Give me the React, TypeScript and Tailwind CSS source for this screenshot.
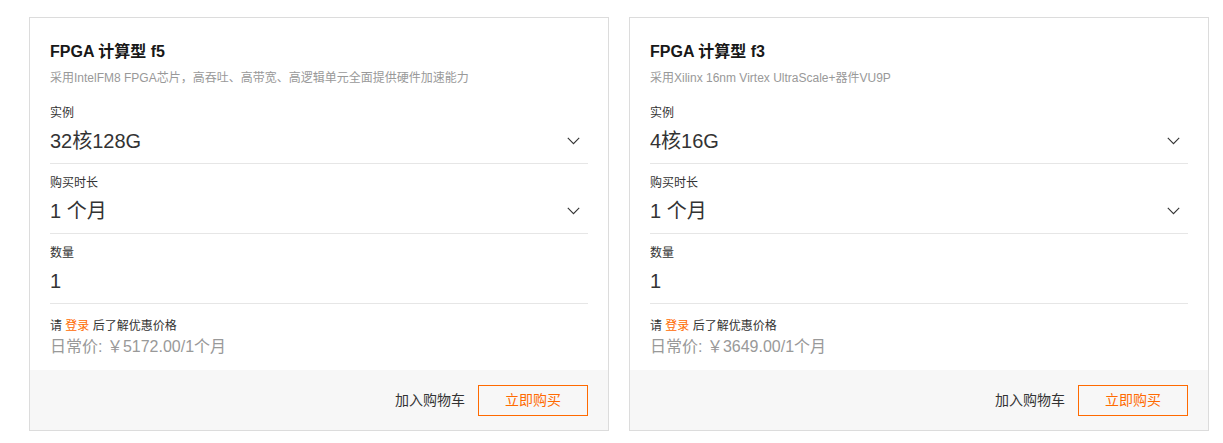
const FONT = "font-['Liberation_Sans','Noto_Sans_CJK_SC',sans-serif]";

interface Product {
  title: string;
  desc: string;
  instance: string;
  duration: string;
  qty: string;
  price: string;
}

const products: Product[] = [
  {
    title: "FPGA 计算型 f5",
    desc: "采用IntelFM8 FPGA芯片，高吞吐、高带宽、高逻辑单元全面提供硬件加速能力",
    instance: "32核128G",
    duration: "1 个月",
    qty: "1",
    price: "日常价: ￥5172.00/1个月",
  },
  {
    title: "FPGA 计算型 f3",
    desc: "采用Xilinx 16nm Virtex UltraScale+器件VU9P",
    instance: "4核16G",
    duration: "1 个月",
    qty: "1",
    price: "日常价: ￥3649.00/1个月",
  },
];

function Chevron() {
  return (
    <svg width="13" height="8" viewBox="0 0 13 8" fill="none" className="mr-[8px]">
      <path d="M0.8 0.8 L6.5 6.6 L12.2 0.8" stroke="#333" strokeWidth="1.1" />
    </svg>
  );
}

function Field({ label, value, select }: { label: string; value: string; select?: boolean }) {
  return (
    <div className="border-b border-[#e6e6e6] pt-[10px] pb-[8px]">
      <div className="text-[12px] leading-[18px] text-[#333]">{label}</div>
      <div className="mt-[5px] flex h-[28px] items-center justify-between">
        <span className="text-[20px] leading-[28px] text-[#333]">{value}</span>
        {select && <Chevron />}
      </div>
    </div>
  );
}

function Card({ p }: { p: Product }) {
  return (
    <div className="flex w-[580px] flex-col border border-[#dcdcdc] bg-white">
      <div className="px-[20px] pt-[22px]">
        <div className="text-[16px] font-bold leading-[24px] text-[#181818]">{p.title}</div>
        <div className="mt-[4px] text-[12px] leading-[20px] text-[#999]">{p.desc}</div>
        <div className="mt-[6px]">
          <Field label="实例" value={p.instance} select />
          <Field label="购买时长" value={p.duration} select />
          <Field label="数量" value={p.qty} />
        </div>
        <div className="pt-[13px] pb-[11px]">
          <div className="text-[12px] leading-[18px] text-[#333]">
            请 <span className="text-[#ff6a00]">登录</span> 后了解优惠价格
          </div>
          <div className="text-[16px] leading-[24px] text-[#999]">{p.price}</div>
        </div>
      </div>
      <div className="flex h-[60px] items-center justify-end gap-[13px] bg-[#f7f7f7] px-[20px]">
        <span className="text-[14px] text-[#333]">加入购物车</span>
        <button className="flex h-[31px] w-[110px] items-center justify-center border border-[#ff6a00] text-[14px] text-[#ff6a00]">
          立即购买
        </button>
      </div>
    </div>
  );
}

export default function App() {
  return (
    <div className={`${FONT} flex min-h-[443px] w-[1223px] items-start gap-[20px] bg-white pt-[17px] pl-[29px]`}>
      {products.map((p) => (
        <Card key={p.title} p={p} />
      ))}
    </div>
  );
}
